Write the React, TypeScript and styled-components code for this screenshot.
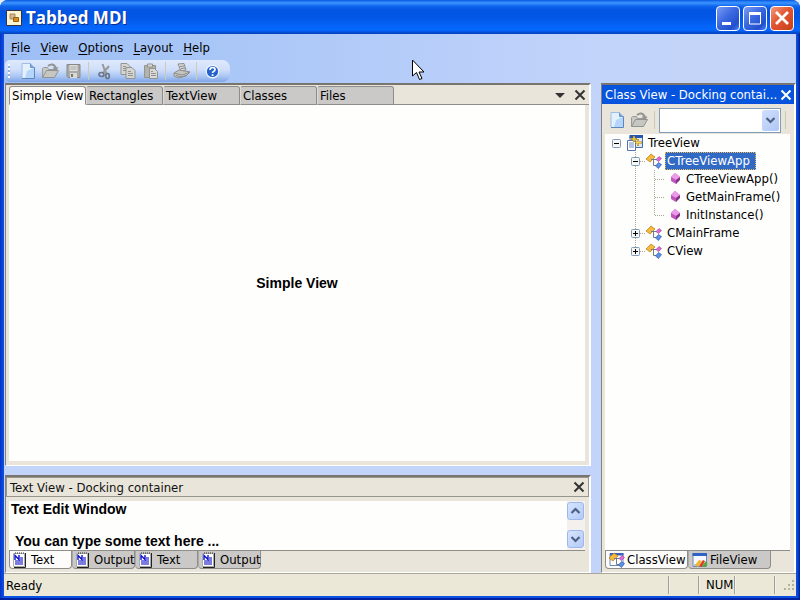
import React, { useState } from "react";
import styled, { createGlobalStyle, css } from "styled-components";

const face = "#e9e5da";
const line = "#8f8d87";
const ui = `13px "DejaVu Sans Condensed", Tahoma, "DejaVu Sans", sans-serif`;

const GlobalStyle = createGlobalStyle`
  * { box-sizing: border-box; }
  body { margin: 0; background: #e6ecf6; font: ${ui}; color: #000; }
  button, select, textarea { font: inherit; color: inherit; }
  svg { display: block; flex: none; }
`;

const Frame = styled.div`
  height: 100vh;
  min-height: 420px;
  display: flex;
  flex-direction: column;
  border-radius: 8px 8px 0 0;
  overflow: hidden;
  background: linear-gradient(90deg, #0831c8 0, #0b55e4 4px, #0b4fe0 calc(100% - 3px), #001d98 100%);
  border-bottom: 2px solid #0020a0;
  padding-bottom: 2px;
`;

const TitleBar = styled.header`
  height: 34px;
  flex: none;
  display: flex;
  align-items: center;
  gap: 4px;
  padding: 2px 6px 0;
  background: linear-gradient(#0b4fd0 0, #1a74f4 1px, #3d95ff 3px, #0f66ee 6px, #0355e2 10px, #0257e6 18px, #0463f6 25px, #0668ff 30px, #0552dc 32px, #0340b8 34px);
`;

const Title = styled.h1`
  flex: 1;
  margin: 0;
  font: 700 17px/24px "Open Sans", "Noto Sans", sans-serif;
  color: #fff;
  text-shadow: 1px 1px 0 #0b2c8c;
`;

const WindowButtons = styled.div`
  display: flex;
  gap: 3px;
`;

const WindowButton = styled.button<{ $danger?: boolean }>`
  width: 24px;
  height: 25px;
  padding: 0;
  display: grid;
  place-items: center;
  border: 1px solid #fff;
  border-radius: 4px;
  background: ${p => p.$danger
    ? "linear-gradient(135deg, #f09a7c, #e25530 45%, #c8401c)"
    : "linear-gradient(135deg, #7a9cf4, #3a68e0 45%, #2250cc 80%, #4a86f8)"};
`;

const Client = styled.div`
  flex: 1;
  min-height: 0;
  margin: 0 4px;
  display: flex;
  flex-direction: column;
  background: #c3d4fa;
`;

const Top = styled.div`
  background: linear-gradient(90deg, #9dbef5, #a8c6f7 25%, #b6cdf9 52%, #c3d4fa 76%, #c4d4f8);
`;

const MenuBar = styled.nav`
  display: flex;
  height: 26px;
  padding: 0 2px;
`;

const MenuItem = styled.button`
  border: 0;
  background: none;
  padding: 2px 5px 0;
  line-height: 20px;
  u { text-underline-offset: 2px; }
`;

const ToolBar = styled.div`
  display: flex;
  align-items: center;
  width: max-content;
  height: 22px;
  margin: 0 0 1px 1px;
  padding: 0 6px 0 3px;
  border-radius: 5px 8px 8px 5px;
  background: linear-gradient(#dfe9fd, #cfdefa 45%, #a9c5f4 75%, #7fa5e6);
`;

const Grip = styled.span`
  width: 2px;
  height: 14px;
  margin-right: 6px;
  background: repeating-linear-gradient(#fff 0 2px, #8fb0e6 2px 4px);
`;

const ToolButton = styled.button`
  width: 23px;
  height: 20px;
  padding: 0;
  border: 0;
  background: none;
  display: grid;
  place-items: center;
`;

const Separator = styled.span`
  width: 1px;
  height: 18px;
  margin: 0 4px 0 3px;
  background: #cdc9b4;
`;

const Workspace = styled.main`
  flex: 1;
  min-height: 0;
  display: grid;
  grid-template-columns: minmax(0, 1fr) 195px;
  gap: 10px;
  padding-left: 1px;
`;

const LeftColumn = styled.div`
  display: flex;
  flex-direction: column;
  gap: 9px;
  min-height: 0;
`;

const Panel = styled.section<{ $grow?: boolean }>`
  ${p => p.$grow && css`flex: 1;`}
  min-height: 0;
  display: flex;
  flex-direction: column;
  background: ${face};
  border: 2px solid;
  border-color: #77756e #fff #fff #85837c;
  border-width: 2px 2px 1px 1px;
`;

const DocTabs = styled.div`
  height: 20px;
  display: flex;
  align-items: flex-end;
  padding: 0 0 0 3px;
`;

const DocTab = styled.button<{ $active: boolean }>`
  width: 77px;
  height: 19px;
  padding: 0 2px;
  text-align: left;
  line-height: 17px;
  white-space: nowrap;
  border: 1px solid ${line};
  border-left-color: ${p => (p.$active ? line : "#dcdad6")};
  border-bottom-color: ${p => (p.$active ? "#fff" : line)};
  border-radius: 3px 3px 0 0;
  background: ${p => (p.$active ? "#fdfcfb" : "#cbc9c7")};
`;

const TabFill = styled.div`
  flex: 1;
  height: 19px;
  display: flex;
  justify-content: flex-end;
  align-items: center;
  gap: 2px;
  border-bottom: 1px solid ${line};
`;

const PlainButton = styled.button<{ $narrow?: boolean }>`
  width: ${p => (p.$narrow ? "14px" : "18px")};
  height: 18px;
  padding: 0;
  border: 0;
  background: none;
  display: grid;
  place-items: center;
`;

const DocView = styled.div`
  flex: 1;
  min-height: 0;
  margin: 0 4px 4px 3px;
  background: #fefefd;
  display: grid;
  place-items: center;
  font: bold 14px/16px "Liberation Sans", Arial, sans-serif;
`;

const Caption = styled.h2<{ $active?: boolean }>`
  flex: none;
  height: ${p => (p.$active ? "19px" : "20px")};
  margin: 0;
  padding: 0 0 0 ${p => (p.$active ? "2px" : "3px")};
  display: flex;
  align-items: center;
  font: ${ui};
  border: 1px solid ${p => (p.$active ? "#0a50dc" : "#98958c")};
  background: ${p => (p.$active ? "#0855dd" : face)};
  color: ${p => (p.$active ? "#fff" : "#111")};
`;

const CaptionText = styled.span`
  flex: 1;
  white-space: nowrap;
`;

const Editor = styled.div`
  display: flex;
  height: 49px;
  margin: 4px 4px 0 3px;
  background: #fefefd;
`;

const EditorText = styled.textarea`
  flex: 1;
  height: 48px;
  border: 0;
  padding: 0 2px;
  resize: none;
  overflow: hidden;
  outline: 0;
  background: none;
  font: bold 14px/16px "Liberation Sans", Arial, sans-serif;
`;

const ScrollBar = styled.div`
  width: 18px;
  padding: 1px 0 2px;
  display: flex;
  flex-direction: column;
  justify-content: space-between;
  background: #f3f0ee;
`;

const ScrollButton = styled.button`
  width: 17px;
  height: 18px;
  padding: 0;
  display: grid;
  place-items: center;
  border: 1px solid #9bb8ee;
  border-radius: 3px;
  background: linear-gradient(135deg, #d6e4ff, #b4cbf8);
`;

const DockTabs = styled.div`
  display: flex;
  height: 22px;
  margin: 0 4px 0 3px;
  border-top: 1px solid ${line};
  align-items: flex-start;
`;

const DockTab = styled.button<{ $active: boolean; $wide?: boolean }>`
  width: ${p => (p.$wide ? "83px" : "63px")};
  height: 18px;
  padding: 0 3px;
  display: flex;
  align-items: center;
  gap: 4px;
  line-height: 17px;
  white-space: nowrap;
  border: 1px solid ${line};
  border-top: 0;
  border-left-color: ${p => (p.$active ? line : "#aaa8a4")};
  border-radius: 0 0 4px 4px;
  background: ${p => (p.$active ? "#fdfcfb" : "#cbc9c7")};
  ${p => p.$wide && css`gap: 2px;`}
`;

const PanelTools = styled.div`
  height: 30px;
  flex: none;
  display: flex;
  align-items: center;
  padding: 2px 4px 0 3px;
`;

const Combo = styled.label`
  display: grid;
  flex: 1;
  height: 25px;
  margin-right: 1px;
  border: 1px solid #7f9db9;
  background: #fff;
  align-items: center;
`;

const ComboSelect = styled.select`
  grid-area: 1 / 1;
  appearance: none;
  width: 100%;
  height: 23px;
  border: 0;
  background: none;
  padding: 0 20px 0 4px;
`;

const ComboArrow = styled.span`
  grid-area: 1 / 1;
  justify-self: end;
  width: 17px;
  height: 21px;
  margin-right: 1px;
  display: grid;
  place-items: center;
  border-radius: 2px;
  pointer-events: none;
  background: linear-gradient(135deg, #d0dffd, #afc7f6);
`;

const Tree = styled.ul`
  flex: 1;
  min-height: 0;
  list-style: none;
  margin: 0 4px 0 3px;
  padding: 0 0 0 2px;
  background: #fefefd;
  overflow: hidden;
`;

const TreeRow = styled.li`
  display: flex;
  align-items: center;
  height: 18px;
`;

const Expander = styled.button`
  width: 19px;
  height: 18px;
  padding: 0;
  border: 0;
  background: none;
`;

const TreeIcon = styled.span`
  margin: 0 3px 0 1px;
`;

const TreeLabel = styled.span<{ $selected: boolean }>`
  height: 18px;
  line-height: 16px;
  padding: 0 5px 0 1px;
  white-space: nowrap;
  border: 1px ${p => (p.$selected ? "dotted #e8b860" : "solid transparent")};
  ${p => p.$selected && css`background: #316ac5; color: #fff;`}
`;

const StatusBar = styled.footer`
  height: 23px;
  flex: none;
  display: flex;
  align-items: center;
  padding: 2px 0 2px 2px;
  border-top: 1px solid #a8a698;
  background: #ebe8d8;
`;

const StatusText = styled.span`
  flex: 1;
`;

const StatusCell = styled.span<{ $width: number }>`
  width: ${p => p.$width}px;
  height: 18px;
  line-height: 18px;
  padding-left: 6px;
  border-left: 2px groove #f4f2e8;
`;

const Pointer = styled.svg`
  position: absolute;
  left: 412px;
  top: 59px;
  pointer-events: none;
`;

const CloseGlyph = ({ color = "#333" }: { color?: string }) => (
  <svg width="12" height="12" viewBox="0 0 12 12"><path d="M1.500 1.500l9 9M10.500 1.500l-9 9" stroke={color} strokeWidth="2" /></svg>
);

const Chevron = ({ up }: { up?: boolean }) => (
  <svg width="11" height="10" viewBox="0 0 11 10"><path d={up ? "M1.500 7l4-4 4 4" : "M1.500 3l4 4 4-4"} fill="none" stroke="#4d6185" strokeWidth="2.200" /></svg>
);

const NewIcon = () => (
  <svg width="16" height="16" viewBox="0 0 16 16">
    <path d="M2 .5h8.500l4 4v11H2z" fill="#e3f0fd" />
    <path d="M7 8l7-3v10H5z" fill="#b5d6fa" />
    <path d="M2 15V.5h8" fill="none" stroke="#a0bce4" />
    <path d="M10.500 .5v4h4v11H2" fill="none" stroke="#5c86bd" />
    <path d="M10.500 .5l4 4h-4z" fill="#79a6dc" />
  </svg>
);

const OpenIcon = () => (
  <svg width="17" height="16" viewBox="0 0 17 16">
    <path d="M.5 14.500v-9l1-1h4l1 2h6v2" fill="#c8c8c5" stroke="#999" />
    <path d="M.5 14.500l4-7h12l-4 7z" fill="#c6c6c2" stroke="#929290" />
    <path d="M6 3q5-4 8 2" fill="none" stroke="#929290" strokeWidth="2" />
    <path d="M10.500 4.500h6L14 8.500z" fill="#929290" />
  </svg>
);

const SaveIcon = () => (
  <svg width="15" height="16" viewBox="0 0 15 16">
    <path d="M1 1.500h13v13H2l-1-1z" fill="#a9a9a7" stroke="#888" />
    <path d="M3.500 2h8v6h-8z" fill="#deded9" />
    <path d="M4.500 4h6M4.500 6h6" stroke="#aaa" />
    <path d="M4 10h7v5H4z" fill="#d9d9d5" /><path d="M5 11h2v3H5z" fill="#777" />
  </svg>
);

const CutIcon = () => (
  <svg width="14" height="17" viewBox="0 0 14 17" fill="none">
    <path d="M4.500 1L7 8l2 3M11 3L5 10" stroke="#999" strokeWidth="2" />
    <ellipse cx="3.500" cy="11.500" rx="2.500" ry="2" stroke="#6c7687" strokeWidth="1.700" />
    <ellipse cx="9.500" cy="13" rx="1.800" ry="2.500" stroke="#6c7687" strokeWidth="1.700" />
  </svg>
);

const CopyIcon = () => (
  <svg width="16" height="16" viewBox="0 0 16 16" stroke="#939391">
    <path d="M1 .5h6l3 3v8H1z" fill="#d5d5d2" /><path d="M3 3.500h3M3 5.500h5M3 7.500h5" />
    <path d="M6 4.500h6l3 3v8H6z" fill="#d5d5d2" /><path d="M8 8.500h3M8 10.500h5M8 12.500h5" />
  </svg>
);

const PasteIcon = () => (
  <svg width="16" height="16" viewBox="0 0 16 16" stroke="#939391">
    <path d="M1.500 2.500h11v12h-11z" fill="#b2b2af" /><path d="M4.500 1h5v3h-5z" fill="#d9d9d5" />
    <path d="M6.500 5.500h5l3 3v7h-8z" fill="#d9d9d6" /><path d="M8 8.500h2M8 10.500h5M8 12.500h5" />
  </svg>
);

const PrintIcon = () => (
  <svg width="18" height="16" viewBox="0 0 18 16" stroke="#8e8e8c">
    <path d="M5 1l6-.5L13 7 8 8z" fill="#d9d9d6" /><path d="M7 3.500l4-.5M8 5.500l4-.5" />
    <path d="M1 10l5-3 11 2-4 4-8 2-4-2z" fill="#c4c4c1" /><path d="M1 10l8 2 8-3M3 12.500l6 1.500 5-2" fill="none" />
  </svg>
);

const HelpIcon = () => (
  <svg width="15" height="15" viewBox="0 0 15 15">
    <circle cx="7.500" cy="7.500" r="6.300" fill="#2662cc" stroke="#e9f1ff" strokeWidth="1.400" />
    <path d="M5 6q0-2.500 2.600-2.500T10 5.700q0 1.200-1.500 1.800-.9.500-.9 1.500" fill="none" stroke="#fff" strokeWidth="1.700" />
    <path d="M6.700 10.200h1.800V12H6.700z" fill="#fff" />
  </svg>
);

const NoteIcon = () => (
  <svg width="14" height="16" viewBox="0 0 14 16">
    <path d="M.5 1.500h11v13H.5z" fill="#fff" stroke="#aaa" />
    <path d="M3 5h7v8H2V9z" fill="#7b7be0" /><path d="M12.500 1v14.500H1" fill="none" stroke="#222" />
    <path d="M2 1h10" stroke="#333" strokeDasharray="1 1" />
    <path d="M1 3h6v5H1z" fill="#fff" /><path d="M2 8V3.500l4 4V3" fill="none" stroke="#1111d0" strokeWidth="1.400" />
  </svg>
);

const ClassShapes = () => (
  <>
    <path d="M0 6l5-5 4 3-5 5z" fill="#f5ba3e" stroke="#b67a16" strokeWidth=".7" />
    <path d="M5 6.500h5.500M7.500 6.500v6H10" fill="none" stroke="#6d7b91" />
    <path d="M10 6.500l3-3 2.500 2-3 3z" fill="#df69d6" stroke="#963b95" strokeWidth=".6" />
    <path d="M9.500 13l3-3.500 3 2-3 4z" fill="#5d91e8" stroke="#264f9e" strokeWidth=".6" />
  </>
);

const ClassIcon = () => <svg width="16" height="16" viewBox="0 0 16 16"><ClassShapes /></svg>;

const ClassViewIcon = () => (
  <svg width="16" height="16" viewBox="0 0 16 16">
    <path d="M1 1.500h13v12H1z" fill="#fff" stroke="#7089b0" /><path d="M1 1h13.500v2.500H1z" fill="#3763ba" />
    <ClassShapes />
  </svg>
);

const FileViewIcon = () => (
  <svg width="16" height="16" viewBox="0 0 16 16">
    <path d="M1 1.500h13.500v13H1z" fill="#f5f8fe" stroke="#7089b0" /><path d="M.5 1h14.500v3H.5z" fill="#2f62c5" />
    <path d="M2 12h3v2H2z" fill="#a8c8f2" />
    <path d="M3 13l4-5 3 1-4 6z" fill="#f0b52e" /><path d="M7 14l4-6 2 1-3 6z" fill="#dd3c25" /><path d="M10 14l4-5 1.500 3-2 3z" fill="#55a838" />
  </svg>
);

const ProjectIcon = () => (
  <svg width="16" height="16" viewBox="0 0 16 16">
    <path d="M3 1.500h12.500v11H3z" fill="#dce9fc" stroke="#456aa8" /><path d="M2.500 0H16v3H2.500z" fill="#2656ad" />
    <path d="M.5 5.500h8v10h-8z" fill="#fff" stroke="#5674aa" /><path d="M2 8h5M2 10h5M2 12h5" stroke="#6c8bc2" />
    <path d="M7 1v6M4 4h6M11 4v7M8 7.500h7" stroke="#a67b10" strokeWidth="2" />
    <path d="M7 1.500v5M4.500 4h5M11 4.500v6M8.500 7.500h6" stroke="#f8d84d" strokeWidth="1.200" />
  </svg>
);

const MethodIcon = () => (
  <svg width="16" height="16" viewBox="0 0 16 16">
    <path d="M6 6l4-4 5 4-4 7-5-3z" fill="#bf55bd" /><path d="M6 6l4-4 5 4-4 3z" fill="#eb9be7" /><path d="M15 6v3l-4 4V9z" fill="#843282" />
  </svg>
);

type Guide = "none" | "line" | "tee" | "corner";

const GuideCell = ({ kind, expanded }: { kind: Guide; expanded?: boolean }) => (
  <svg width="19" height="18" viewBox="0 0 19 18" fill="none">
    {kind !== "none" && (
      <path d={kind === "corner" ? "M9.500 0v10" : "M9.500 0v18"} stroke="#aaa696" strokeDasharray="1 1" />
    )}
    {(kind === "tee" || kind === "corner") && <path d="M10 9.500h9" stroke="#aaa696" strokeDasharray="1 1" />}
    {expanded !== undefined && (
      <>
        <rect x="5.500" y="5.500" width="8" height="8" rx="1" fill="#f7f6f2" stroke="#7d9ab8" />
        <path d={expanded ? "M7 9.500h5" : "M7 9.500h5M9.500 7v5"} stroke="#000" />
      </>
    )}
  </svg>
);

interface Node {
  label: string;
  guides: Guide[];
  expanded?: boolean;
  icon: React.ReactNode;
}

const nodes: Node[] = [
  { label: "TreeView", guides: ["none"], expanded: true, icon: <ProjectIcon /> },
  { label: "CTreeViewApp", guides: ["none", "tee"], expanded: true, icon: <ClassIcon /> },
  { label: "CTreeViewApp()", guides: ["none", "line", "tee"], icon: <MethodIcon /> },
  { label: "GetMainFrame()", guides: ["none", "line", "tee"], icon: <MethodIcon /> },
  { label: "InitInstance()", guides: ["none", "line", "corner"], icon: <MethodIcon /> },
  { label: "CMainFrame", guides: ["none", "tee"], expanded: false, icon: <ClassIcon /> },
  { label: "CView", guides: ["none", "corner"], expanded: false, icon: <ClassIcon /> },
];

const docTabs = ["Simple View", "Rectangles", "TextView", "Classes", "Files"];
const outputTabs = ["Text", "Output", "Text", "Output"];

export default function App() {
  const [doc, setDoc] = useState(0);
  const [output, setOutput] = useState(0);
  const [dock, setDock] = useState(0);

  return (
    <Frame>
      <GlobalStyle />
      <TitleBar>
        <svg width="16" height="16" viewBox="0 0 16 16">
          <path d="M.5 .5h15v15H.5z" fill="#fbf6d2" stroke="#334" />
          <path d="M4 4h5v5H4z" fill="#d8b58c" stroke="#a68768" /><path d="M7.500 7.500h5v4h-5z" fill="#d98a20" stroke="#96610f" />
        </svg>
        <Title>Tabbed MDI</Title>
        <WindowButtons>
          <WindowButton aria-label="Minimize"><svg width="18" height="18"><path d="M3 13h9v3H3z" fill="#fff" /></svg></WindowButton>
          <WindowButton aria-label="Maximize"><svg width="18" height="18"><path d="M3.500 4v11h11V4" fill="none" stroke="#fff" /><path d="M3 3h12v3H3z" fill="#fff" /></svg></WindowButton>
          <WindowButton aria-label="Close" $danger><svg width="18" height="18"><path d="M3 3l12 12M15 3L3 15" stroke="#fff" strokeWidth="2.800" /></svg></WindowButton>
        </WindowButtons>
      </TitleBar>
      <Client>
        <Top>
          <MenuBar>
            {["File", "View", "Options", "Layout", "Help"].map(m => (
              <MenuItem key={m}><u>{m[0]}</u>{m.slice(1)}</MenuItem>
            ))}
          </MenuBar>
          <ToolBar>
            <Grip />
            <ToolButton aria-label="New"><NewIcon /></ToolButton>
            <ToolButton aria-label="Open"><OpenIcon /></ToolButton>
            <ToolButton aria-label="Save"><SaveIcon /></ToolButton>
            <Separator />
            <ToolButton aria-label="Cut"><CutIcon /></ToolButton>
            <ToolButton aria-label="Copy"><CopyIcon /></ToolButton>
            <ToolButton aria-label="Paste"><PasteIcon /></ToolButton>
            <Separator />
            <ToolButton aria-label="Print"><PrintIcon /></ToolButton>
            <Separator />
            <ToolButton aria-label="About"><HelpIcon /></ToolButton>
          </ToolBar>
        </Top>
        <Workspace>
          <LeftColumn>
            <Panel $grow>
              <DocTabs>
                {docTabs.map((t, i) => (
                  <DocTab key={t} $active={i === doc} onClick={() => setDoc(i)}>{t}</DocTab>
                ))}
                <TabFill>
                  <PlainButton aria-label="Window list"><svg width="10" height="5"><path d="M0 0h10L5 5z" fill="#333" /></svg></PlainButton>
                  <PlainButton aria-label="Close view"><CloseGlyph /></PlainButton>
                </TabFill>
              </DocTabs>
              <DocView>{docTabs[doc]}</DocView>
            </Panel>
            <Panel>
              <Caption>
                <CaptionText>Text View - Docking container</CaptionText>
                <PlainButton aria-label="Close text view"><CloseGlyph /></PlainButton>
              </Caption>
              <Editor>
                <EditorText aria-label="Text editor" spellCheck={false} defaultValue={"Text Edit Window\n\n You can type some text here ..."} />
                <ScrollBar>
                  <ScrollButton aria-label="Scroll up"><Chevron up /></ScrollButton>
                  <ScrollButton aria-label="Scroll down"><Chevron /></ScrollButton>
                </ScrollBar>
              </Editor>
              <DockTabs>
                {outputTabs.map((t, i) => (
                  <DockTab key={i} $active={i === output} onClick={() => setOutput(i)}><NoteIcon />{t}</DockTab>
                ))}
              </DockTabs>
            </Panel>
          </LeftColumn>
          <Panel>
            <Caption $active>
              <CaptionText>Class View - Docking contai...</CaptionText>
              <PlainButton $narrow aria-label="Close class view"><CloseGlyph color="#fff" /></PlainButton>
            </Caption>
            <PanelTools>
              <ToolButton aria-label="New class"><NewIcon /></ToolButton>
              <ToolButton aria-label="Open class"><OpenIcon /></ToolButton>
              <Separator />
              <Combo>
                <ComboSelect aria-label="Filter"><option></option></ComboSelect>
                <ComboArrow><Chevron /></ComboArrow>
              </Combo>
              <Separator />
            </PanelTools>
            <Tree>
              {nodes.map(n => (
                <TreeRow key={n.label}>
                  {n.guides.map((g, i) =>
                    i === n.guides.length - 1 && n.expanded !== undefined ? (
                      <Expander key={i} aria-label={`Toggle ${n.label}`}><GuideCell kind={g} expanded={n.expanded} /></Expander>
                    ) : (
                      <GuideCell key={i} kind={g} />
                    )
                  )}
                  <TreeIcon>{n.icon}</TreeIcon>
                  <TreeLabel $selected={n.label === "CTreeViewApp"}>{n.label}</TreeLabel>
                </TreeRow>
              ))}
            </Tree>
            <DockTabs>
              <DockTab $wide $active={dock === 0} onClick={() => setDock(0)}><ClassViewIcon />ClassView</DockTab>
              <DockTab $wide $active={dock === 1} onClick={() => setDock(1)}><FileViewIcon />FileView</DockTab>
            </DockTabs>
          </Panel>
        </Workspace>
        <StatusBar>
          <StatusText>Ready</StatusText>
          <StatusCell $width={30} />
          <StatusCell $width={36}>NUM</StatusCell>
          <StatusCell $width={40} />
          <StatusCell $width={7} />
          <svg width="14" height="14" viewBox="0 0 14 14" fill="#b5b19f">
            <path d="M10 2h2v2h-2zM10 6h2v2h-2zM6 6h2v2H6zM10 10h2v2h-2zM6 10h2v2H6zM2 10h2v2H2z" />
          </svg>
        </StatusBar>
      </Client>
      <Pointer width="13" height="22" viewBox="0 0 13 22">
        <path d="M.5 1v16l4-3.500 3 7 2.500-1-3-6.500h5z" fill="#fff" stroke="#000" />
      </Pointer>
    </Frame>
  );
}
